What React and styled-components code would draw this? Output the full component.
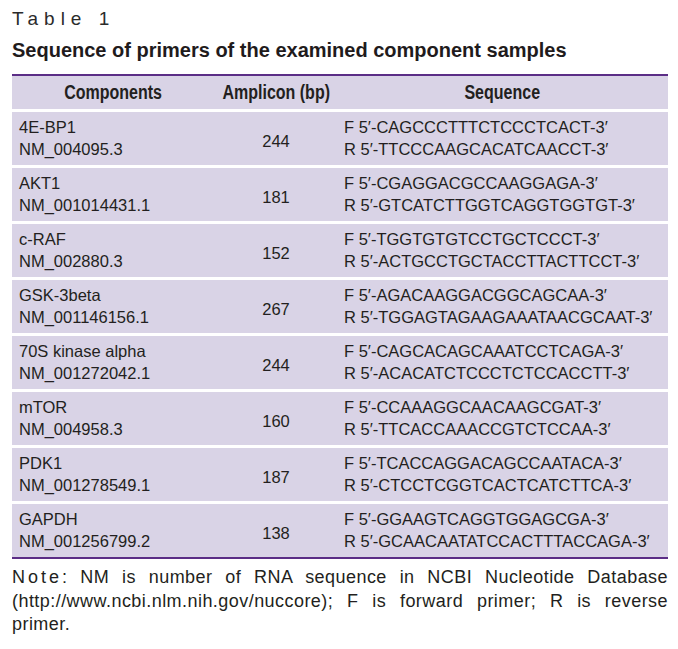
import styled, { createGlobalStyle } from "styled-components"

const GlobalStyle = createGlobalStyle`
  body {
    margin: 0;
    background: #ffffff;
    font-family: "Liberation Sans", Arial, sans-serif;
    color: #231f20;
  }
`

const Page = styled.div`
  padding: 7px 10px 0 12px;
`

const Title = styled.div`
  font-size: 19px;
  line-height: 24px;
  letter-spacing: 6px;
  color: #2b2b2b;
`

const Subtitle = styled.div`
  margin-top: 7px;
  font-size: 20px;
  line-height: 24px;
  font-weight: 700;
  color: #1f1b1c;
`

const Table = styled.div`
  margin-top: 12px;
  width: 656px;
  display: flex;
  flex-direction: column;
  gap: 3px;
  border-top: 2px solid #5b2d86;
  border-bottom: 2px solid #5b2d86;
`

const Row = styled.div`
  display: grid;
  grid-template-columns: 203px 122px 331px;
  height: ${p => (p.$head ? 33 : 53)}px;
  background: #d9d3e6;
`

const HeadCell = styled.div`
  display: flex;
  align-items: center;
  justify-content: center;
`

const Narrow = styled.span`
  display: inline-block;
  font-size: 20px;
  font-weight: 700;
  white-space: nowrap;
  transform: scaleX(0.8);
`

const Cell = styled.div`
  display: flex;
  flex-direction: column;
  justify-content: center;
  align-items: ${p => (p.$center ? "center" : "flex-start")};
  padding: ${p => (p.$center ? "5px 0 0" : "0 0 1px 7px")};
  font-size: 16.5px;
  line-height: 22px;
  white-space: nowrap;
`

const Note = styled.p`
  margin: 7px 0 0;
  font-size: 18px;
  line-height: 23.5px;
  letter-spacing: 0.45px;
  text-align: justify;
`

const Spaced = styled.span`
  letter-spacing: 3px;
`

const rows = [
  ["4E-BP1", "NM_004095.3", "244", "CAGCCCTTTCTCCCTCACT", "TTCCCAAGCACATCAACCT"],
  ["AKT1", "NM_001014431.1", "181", "CGAGGACGCCAAGGAGA", "GTCATCTTGGTCAGGTGGTGT"],
  ["c-RAF", "NM_002880.3", "152", "TGGTGTGTCCTGCTCCCT", "ACTGCCTGCTACCTTACTTCCT"],
  ["GSK-3beta", "NM_001146156.1", "267", "AGACAAGGACGGCAGCAA", "TGGAGTAGAAGAAATAACGCAAT"],
  ["70S kinase alpha", "NM_001272042.1", "244", "CAGCACAGCAAATCCTCAGA", "ACACATCTCCCTCTCCACCTT"],
  ["mTOR", "NM_004958.3", "160", "CCAAAGGCAACAAGCGAT", "TTCACCAAACCGTCTCCAA"],
  ["PDK1", "NM_001278549.1", "187", "TCACCAGGACAGCCAATACA", "CTCCTCGGTCACTCATCTTCA"],
  ["GAPDH", "NM_001256799.2", "138", "GGAAGTCAGGTGGAGCGA", "GCAACAATATCCACTTTACCAGA"],
]

const App = () => {
  return (
    <Page>
      <GlobalStyle />
      <Title>Table 1</Title>
      <Subtitle>Sequence of primers of the examined component samples</Subtitle>
      <Table>
        <Row $head>
          <HeadCell><Narrow>Components</Narrow></HeadCell>
          <HeadCell><Narrow>Amplicon (bp)</Narrow></HeadCell>
          <HeadCell><Narrow>Sequence</Narrow></HeadCell>
        </Row>
        {rows.map(([name, nm, bp, fwd, rev]) => (
          <Row key={nm}>
            <Cell>
              <span>{name}</span>
              <span>{nm}</span>
            </Cell>
            <Cell $center>{bp}</Cell>
            <Cell>
              <span>F 5′-{fwd}-3′</span>
              <span>R 5′-{rev}-3′</span>
            </Cell>
          </Row>
        ))}
      </Table>
      <Note>
        <Spaced>Note</Spaced>: NM is number of RNA sequence in NCBI Nucleotide Database
        (http://www.ncbi.nlm.nih.gov/nuccore); F is forward primer; R is reverse primer.
      </Note>
    </Page>
  )
}

export default App
